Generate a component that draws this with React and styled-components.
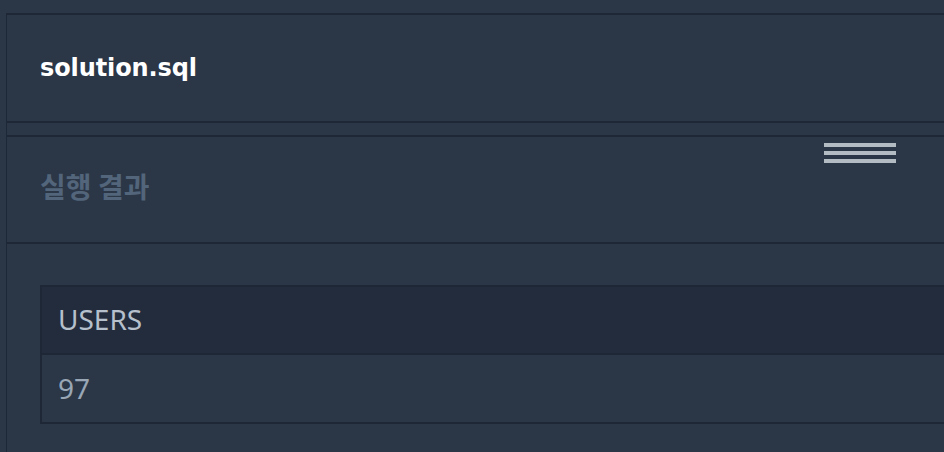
import React from 'react';
import styled, { createGlobalStyle } from 'styled-components';

const GlobalStyle = createGlobalStyle`
  html, body {
    margin: 0;
    padding: 0;
    background: #2b3647;
  }
  * {
    box-sizing: border-box;
  }
`;

const Page = styled.div`
  width: 944px;
  height: 452px;
  overflow: hidden;
  padding-top: 13px;
  background: #2b3647;
`;

const Frame = styled.div`
  margin-left: 6px;
  height: 100%;
  border-top: 2px solid #1e2736;
  border-left: 1px solid #1e2736;
`;

const FileHeader = styled.div`
  height: 108px;
  display: flex;
  align-items: center;
  padding: 0 0 0 33px;
  border-bottom: 2px solid #1e2736;
`;

const FileName = styled.h1`
  margin: 0;
  font-family: 'DejaVu Sans', Inter, sans-serif;
  font-size: 24px;
  font-weight: 700;
  letter-spacing: -0.1px;
  color: #ffffff;
`;

const Divider = styled.div`
  height: 14px;
  border-bottom: 2px solid #1e2736;
`;

const ResultHeader = styled.div`
  position: relative;
  height: 107px;
  display: flex;
  align-items: center;
  padding-left: 33px;
  border-bottom: 2px solid #1e2736;
`;

const ResultTitle = styled.h2`
  margin: 0;
  padding-bottom: 8px;
  font-family: 'Noto Sans CJK KR', 'Noto Sans', sans-serif;
  font-size: 28px;
  font-weight: 700;
  color: #52657a;
`;

const Handle = styled.div`
  position: absolute;
  top: 6px;
  left: 817px;
  width: 72px;
  display: flex;
  flex-direction: column;
  gap: 4px;
`;

const HandleBar = styled.span`
  display: block;
  height: 4px;
  background: #b3bcc3;
`;

const TableArea = styled.div`
  padding: 41px 0 0 33px;
`;

const Table = styled.table`
  width: 960px;
  border-collapse: collapse;
  border: 2px solid #1e2736;
  font-family: 'Noto Sans', 'Open Sans', sans-serif;
  font-size: 28px;
`;

const HeadCell = styled.th`
  height: 68px;
  padding: 0 0 2px 16px;
  text-align: left;
  font-weight: 400;
  color: #b6c0cc;
  background: #232c3d;
  border-bottom: 2px solid #1e2736;
`;

const Cell = styled.td`
  height: 69px;
  padding: 0 0 2px 16px;
  color: #98a6b5;
  background: #2b3647;
`;

export default function App() {
  return (
    <>
      <GlobalStyle />
      <Page>
        <Frame>
          <FileHeader>
            <FileName>solution.sql</FileName>
          </FileHeader>
          <Divider />
          <ResultHeader>
            <ResultTitle>실행 결과</ResultTitle>
            <Handle>
              <HandleBar />
              <HandleBar />
              <HandleBar />
            </Handle>
          </ResultHeader>
          <TableArea>
            <Table>
              <thead>
                <tr>
                  <HeadCell>USERS</HeadCell>
                </tr>
              </thead>
              <tbody>
                <tr>
                  <Cell>97</Cell>
                </tr>
              </tbody>
            </Table>
          </TableArea>
        </Frame>
      </Page>
    </>
  );
}
